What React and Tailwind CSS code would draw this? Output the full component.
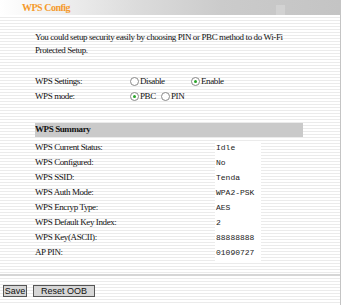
import React from "react";

const serif = "font-['Liberation_Serif','Times_New_Roman',serif]";

function Radio({ checked, label }) {
  return (
    <span className="flex items-center gap-[1px]">
      <span className="w-[9px] h-[9px] shrink-0 rounded-full border border-[#8a8a8a] bg-white flex items-center justify-center">
        {checked && <span className="w-[3px] h-[3px] rounded-full bg-[#2aa52a]" />}
      </span>
      <span>{label}</span>
    </span>
  );
}

const summary = [
  ["WPS Current Status:", "Idle"],
  ["WPS Configured:", "No"],
  ["WPS SSID:", "Tenda"],
  ["WPS Auth Mode:", "WPA2-PSK"],
  ["WPS Encryp Type:", "AES"],
  ["WPS Default Key Index:", "2"],
  ["WPS Key(ASCII):", "88888888"],
  ["AP PIN:", "01090727"],
];

export default function App() {
  return (
    <div
      className={`w-[341px] h-[305px] overflow-hidden border-r border-[#c4c4c4] text-[9px] tracking-[-0.4px] text-[#111] ${serif} bg-[repeating-linear-gradient(to_bottom,#ffffff_0px,#ffffff_2px,#ebebeb_2px,#ebebeb_3px)]`}
    >
      {/* Header */}
      <div className="relative h-[16px] border-b border-white bg-[linear-gradient(to_right,#ffffff_0%,#f4f4f4_12%,#dcdcdc_40%,#cbcbcb_65%,#c4c4c4_100%)] flex items-center pl-[22px]">
        <span className="text-[10px] font-bold text-[#f59a2c] tracking-[-0.5px]">WPS Config</span>
        <span className="absolute left-[276px] top-[5px] w-[9px] h-[10px] bg-[#d2d2d2]" />
      </div>

      <div className="pl-[35px]">
        <p className="mt-[15px] leading-[13px] w-[268px]">
          You could setup security easily by choosing PIN or PBC method to do Wi-Fi Protected Setup.
        </p>

        <div className="mt-[17px]">
          <div className="grid grid-cols-[95px_61px_auto] h-[15px] items-center">
            <span>WPS Settings:</span>
            <Radio label="Disable" />
            <Radio checked label="Enable" />
          </div>
          <div className="grid grid-cols-[95px_31px_auto] h-[15px] items-center">
            <span>WPS mode:</span>
            <Radio checked label="PBC" />
            <Radio label="PIN" />
          </div>
        </div>

        <div className="mt-[19px] w-[268px]">
          <div className="h-[14px] bg-[#cacaca] flex items-center font-bold">WPS Summary</div>
          <div className="mt-[3.5px]">
            {summary.map(([k, v]) => (
              <div key={k} className="grid grid-cols-[180px_46px] h-[15px] items-center">
                <span>{k}</span>
                <span className="h-full flex items-center pl-[1px] bg-white font-['Liberation_Mono',monospace] text-[8px] tracking-normal text-[#222]">
                  {v}
                </span>
              </div>
            ))}
          </div>
        </div>
      </div>

      <div className="mt-[13.5px] h-[2px] bg-[#d6d6d6]" />

      <div className="flex gap-[6px] pl-[3px] mt-[9px] font-['Liberation_Sans',Arial,sans-serif] text-[9px] tracking-normal">
        <button className="h-[12px] w-[24px] bg-[#d6d6d6] border border-[#555] leading-none">Save</button>
        <button className="h-[12px] w-[62px] bg-[#d6d6d6] border border-[#555] leading-none">Reset OOB</button>
      </div>
    </div>
  );
}
